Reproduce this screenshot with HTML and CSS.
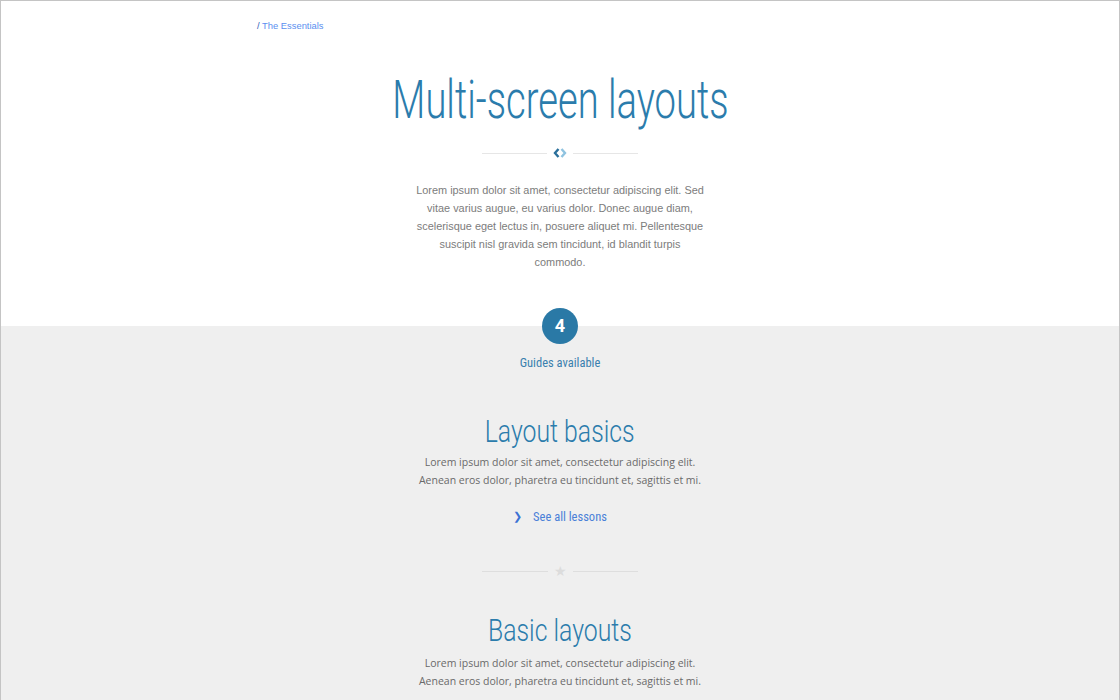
FILE: index.html
```html
<!DOCTYPE html>
<html lang="en">
<head>
<meta charset="utf-8">
<title>Multi-screen layouts</title>
<link rel="stylesheet" href="styles.css">
</head>
<body>
<div class="page">
  <header class="hero">
    <nav class="crumbs"><span class="slash">/</span> <a href="#">The Essentials</a></nav>
    <h1 class="title"><span class="narrow narrow-lg">Multi-screen layouts</span></h1>
    <div class="divider">
      <span class="rule"></span>
      <svg class="arrows" width="14" height="10" viewBox="0 0 14 10">
        <path d="M5.5 1 L2 5 L5.5 9" fill="none" stroke="#2a6f9b" stroke-width="2.4"/>
        <path d="M8.5 1 L12 5 L8.5 9" fill="none" stroke="#8fc3e0" stroke-width="2.4"/>
      </svg>
      <span class="rule"></span>
    </div>
    <p class="intro">Lorem ipsum dolor sit amet, consectetur adipiscing elit. Sed vitae varius augue, eu varius dolor. Donec augue diam, scelerisque eget lectus in, posuere aliquet mi. Pellentesque suscipit nisl gravida sem tincidunt, id blandit turpis commodo.</p>
  </header>
  <main class="guides">
    <div class="badge">4</div>
    <div class="badge-label">Guides available</div>

    <section class="guide">
      <h2 class="guide-title"><span class="narrow">Layout basics</span></h2>
      <p class="guide-text">Lorem ipsum dolor sit amet, consectetur adipiscing elit.<br>Aenean eros dolor, pharetra eu tincidunt et, sagittis et mi.</p>
      <a class="lessons" href="#"><span class="chev">❯</span>See all lessons</a>
    </section>

    <div class="divider star-divider">
      <span class="rule"></span>
      <span class="star">★</span>
      <span class="rule"></span>
    </div>

    <section class="guide">
      <h2 class="guide-title second"><span class="narrow">Basic layouts</span></h2>
      <p class="guide-text second-text">Lorem ipsum dolor sit amet, consectetur adipiscing elit.<br>Aenean eros dolor, pharetra eu tincidunt et, sagittis et mi.</p>
    </section>
  </main>
</div>
</body>
</html>
```

FILE: styles.css
```css
* { box-sizing: border-box; }
html, body { margin: 0; padding: 0; }
body {
  font-family: "Liberation Sans", Arial, sans-serif;
  background: #ffffff;
}
.page {
  width: 1120px;
  height: 700px;
  overflow: hidden;
  border: 1px solid #c4c4c4;
  border-bottom: none;
  display: flex;
  flex-direction: column;
}
.hero {
  background: #ffffff;
  height: 325px;
  display: flex;
  flex-direction: column;
  align-items: center;
}
.crumbs {
  margin: 0 auto;
  width: 606px;
  padding-top: 19px;
  font-size: 9.4px;
  line-height: 12px;
  color: #3b6fd0;
}
.crumbs a { color: #5b8ff0; text-decoration: none; }
.crumbs .slash { color: #3560b8; }
.narrow {
  display: inline-block;
  transform: scaleX(0.8);
  transform-origin: center;
  white-space: nowrap;
}
.narrow-lg { transform: scaleX(0.72); }
.title {
  margin: 38px 0 0;
  font-family: Roboto, "Liberation Sans", sans-serif;
  font-weight: 300;
  font-size: 53px;
  line-height: 60px;
  color: #2b7cac;
  text-align: center;
}
.divider {
  display: flex;
  align-items: center;
  justify-content: center;
  gap: 6px;
  margin-top: 18px;
  width: 156px;
}
.divider .rule {
  flex: 1;
  height: 1px;
  background: #e6e6e6;
}
.arrows { display: block; }
.intro {
  margin: 23px 0 0;
  width: 292px;
  text-align: center;
  font-size: 10.9px;
  line-height: 18px;
  color: #7c7c7c;
}
.guides {
  flex: 1;
  background: #efefef;
  display: flex;
  flex-direction: column;
  align-items: center;
}
.badge {
  margin-top: -18px;
  width: 36px;
  height: 36px;
  border-radius: 50%;
  background: #2a79a6;
  color: #fff;
  font-family: Roboto, "Liberation Sans", sans-serif;
  font-weight: 700;
  font-size: 18px;
  line-height: 36px;
  text-align: center;
}
.badge-label {
  margin-top: 11px;
  font-family: Roboto, "Liberation Sans", sans-serif;
  font-stretch: condensed;
  font-size: 12.5px;
  font-weight: 400;
  color: #3a7fae;
}
.guide {
  display: flex;
  flex-direction: column;
  align-items: center;
  text-align: center;
}
.guide-title {
  margin: 44px 0 0;
  font-family: Roboto, "Liberation Sans", sans-serif;
  font-weight: 300;
  font-size: 31px;
  line-height: 36px;
  color: #2b7cac;
}
.guide-text {
  margin: 3px 0 0;
  font-family: "Open Sans", sans-serif;
  font-size: 10.5px;
  line-height: 18px;
  color: #6a6a6a;
}
.lessons {
  margin-top: 20px;
  display: flex;
  align-items: center;
  gap: 11px;
  font-family: Roboto, "Liberation Sans", sans-serif;
  font-stretch: condensed;
  font-size: 12.5px;
  font-weight: 400;
  color: #4a80d8;
  text-decoration: none;
}
.lessons .chev { font-size: 11px; color: #3c72d4; }
.star-divider { margin-top: 40px; }
.star-divider .rule { background: #dedede; }
.star { color: #dcdcdc; font-size: 14px; line-height: 14px; }
.guide-title.second { margin-top: 35px; }
.guide-text.second-text { margin-top: 5px; }
```
